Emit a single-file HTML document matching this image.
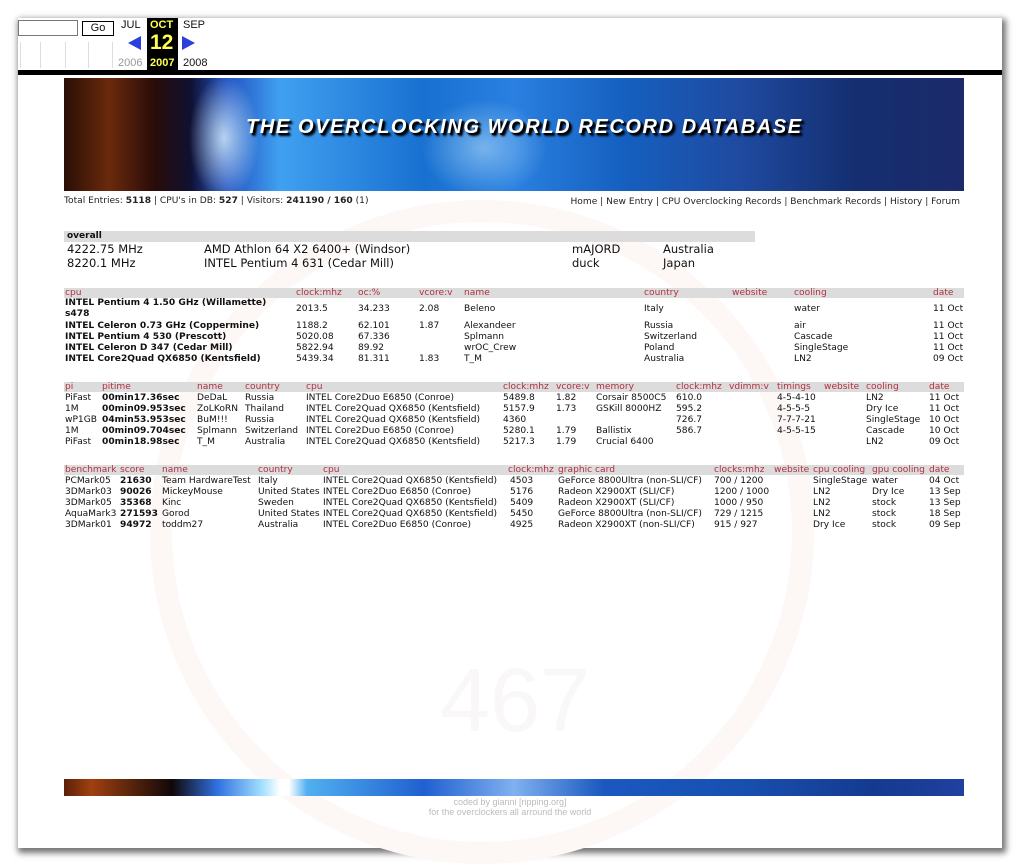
<!DOCTYPE html>
<html><head><meta charset="utf-8"><style>
body{margin:0;background:#fff;width:1020px;height:866px;overflow:hidden;position:relative;font-family:"DejaVu Sans",Verdana,sans-serif;font-size:9.1px;color:#111}
#page{position:absolute;left:18px;top:18px;width:984px;height:830px;background:#fff;box-shadow:2px 3px 6px 2px rgba(0,0,0,.55)}
.a{position:absolute;white-space:nowrap}
.bar{position:absolute;background:#dcdcdc;height:10px}
.h{color:#b03040}
b{font-weight:bold}
.row span,.hr span{position:absolute;white-space:nowrap}
.row,.hr{position:absolute;left:0;width:1020px;height:11px;line-height:11px}
</style></head><body>
<div id="page"></div>
<!-- toolbar -->
<div class="a" style="left:18px;top:20px;width:58px;height:14px;border:1px solid #777;background:#fff"></div>
<div class="a" style="left:82px;top:21px;width:30px;height:13px;border:1px solid #000;font-family:'Liberation Sans',sans-serif;font-size:11px;text-align:center;line-height:13px">Go</div>
<div class="a" style="left:121px;top:19px;font-family:'Liberation Sans',sans-serif;font-size:11px">JUL</div>
<div class="a" style="left:183px;top:19px;font-family:'Liberation Sans',sans-serif;font-size:11px">SEP</div>
<div class="a" style="left:147px;top:18px;width:31px;height:52px;background:#000"></div>
<div class="a" style="left:150px;top:19px;font-family:'Liberation Sans',sans-serif;font-size:11px;font-weight:bold;color:#ff5">OCT</div>
<div class="a" style="left:150px;top:31px;font-family:'Liberation Sans',sans-serif;font-size:21px;font-weight:bold;color:#ff5;line-height:24px">12</div>
<div class="a" style="left:150px;top:57px;font-family:'Liberation Sans',sans-serif;font-size:11px;font-weight:bold;color:#ff5">2007</div>
<div class="a" style="left:118px;top:57px;font-family:'Liberation Sans',sans-serif;font-size:11px;color:#999">2006</div>
<div class="a" style="left:183px;top:57px;font-family:'Liberation Sans',sans-serif;font-size:11px">2008</div>
<svg class="a" style="left:128px;top:36px" width="14" height="14"><polygon points="13,0 13,14 0,7" fill="#2a3fdc"/></svg>
<svg class="a" style="left:182px;top:36px" width="14" height="14"><polygon points="0,0 0,14 13,7" fill="#2a3fdc"/></svg>
<div class="a" style="left:20px;top:42px;width:92px;height:26px;border-left:1px solid #ddd;"></div>
<div class="a" style="left:40px;top:42px;height:26px;border-left:1px solid #ddd;"></div>
<div class="a" style="left:65px;top:42px;height:26px;border-left:1px solid #ddd;"></div>
<div class="a" style="left:88px;top:42px;height:26px;border-left:1px solid #ddd;"></div>
<div class="a" style="left:112px;top:42px;height:26px;border-left:1px solid #ddd;"></div>
<div class="a" style="left:18px;top:70px;width:984px;height:5px;background:#000"></div>

<!-- watermark -->
<div class="a" style="left:150px;top:200px;width:620px;height:620px;border-radius:50%;border:22px solid #fdf7f6"></div>
<div class="a" style="left:440px;top:650px;font-family:'Liberation Sans',sans-serif;font-size:90px;color:#f9f7f7">467</div>

<!-- banner -->
<div class="a" style="left:64px;top:78px;width:900px;height:113px;background:
radial-gradient(ellipse 50px 90px at 160px 60px,rgba(220,245,255,.8),rgba(120,200,255,0) 70%),
radial-gradient(ellipse 90px 70px at 420px 70px,rgba(200,235,255,.5),rgba(0,0,0,0) 70%),
linear-gradient(90deg,#2a0e06 0%,#6a2a0c 5%,#2a0c08 10%,#101030 14%,#2050c0 18%,#40a0f0 24%,#1870d0 40%,#2a80e0 50%,#1560c0 62%,#1f4aa0 75%,#142e70 88%,#1c2a6a 100%)"></div>
<div class="a" style="left:246px;top:116px;font-family:'Liberation Sans',sans-serif;font-style:italic;font-weight:bold;font-size:20px;color:#fff;letter-spacing:1.6px;text-shadow:2px 2px 1px #000,3px 3px 2px #000">THE OVERCLOCKING WORLD RECORD DATABASE</div>

<div class="a" style="left:64px;top:196px;color:#222">Total Entries: <b>5118</b> | CPU's in DB: <b>527</b> | Visitors: <b>241190 / 160</b> (1)</div>
<div class="a" style="right:60px;top:197px;color:#222">Home | New Entry | CPU Overclocking Records | Benchmark Records | History | Forum</div>

<!-- overall -->
<div class="bar" style="left:64px;top:231px;width:691px;height:11px"></div>
<div class="a" style="left:67px;top:231px;font-weight:bold;font-size:9px">overall</div>
<div class="a" style="left:67px;top:242px;font-size:11.5px;line-height:14px">4222.75 MHz<br>8220.1 MHz</div>
<div class="a" style="left:204px;top:242px;font-size:11.5px;line-height:14px">AMD Athlon 64 X2 6400+ (Windsor)<br>INTEL Pentium 4 631 (Cedar Mill)</div>
<div class="a" style="left:572px;top:242px;font-size:11.5px;line-height:14px">mAJORD<br>duck</div>
<div class="a" style="left:663px;top:242px;font-size:11.5px;line-height:14px">Australia<br>Japan</div>

<!-- cpu table -->
<div class="bar" style="left:64px;top:288px;width:900px"></div>
<div class="hr h" style="top:288px"><span style="left:65px">cpu</span><span style="left:296px">clock:mhz</span><span style="left:358px">oc:%</span><span style="left:419px">vcore:v</span><span style="left:464px">name</span><span style="left:644px">country</span><span style="left:732px">website</span><span style="left:794px">cooling</span><span style="left:933px">date</span></div>
<div class="row" style="top:298px"><span style="left:65px;font-weight:bold">INTEL Pentium 4 1.50 GHz (Willamette)</span></div>
<div class="row" style="top:304px"><span style="left:296px">2013.5</span><span style="left:358px">34.233</span><span style="left:419px">2.08</span><span style="left:464px">Beleno</span><span style="left:644px">Italy</span><span style="left:794px">water</span><span style="left:933px">11 Oct</span></div>
<div class="row" style="top:309px"><span style="left:65px;font-weight:bold">s478</span></div>
<div class="row" style="top:321px"><span style="left:65px;font-weight:bold">INTEL Celeron 0.73 GHz (Coppermine)</span><span style="left:296px">1188.2</span><span style="left:358px">62.101</span><span style="left:419px">1.87</span><span style="left:464px">Alexandeer</span><span style="left:644px">Russia</span><span style="left:794px">air</span><span style="left:933px">11 Oct</span></div>
<div class="row" style="top:332px"><span style="left:65px;font-weight:bold">INTEL Pentium 4 530 (Prescott)</span><span style="left:296px">5020.08</span><span style="left:358px">67.336</span><span style="left:464px">Splmann</span><span style="left:644px">Switzerland</span><span style="left:794px">Cascade</span><span style="left:933px">11 Oct</span></div>
<div class="row" style="top:343px"><span style="left:65px;font-weight:bold">INTEL Celeron D 347 (Cedar Mill)</span><span style="left:296px">5822.94</span><span style="left:358px">89.92</span><span style="left:464px">wrOC_Crew</span><span style="left:644px">Poland</span><span style="left:794px">SingleStage</span><span style="left:933px">11 Oct</span></div>
<div class="row" style="top:354px"><span style="left:65px;font-weight:bold">INTEL Core2Quad QX6850 (Kentsfield)</span><span style="left:296px">5439.34</span><span style="left:358px">81.311</span><span style="left:419px">1.83</span><span style="left:464px">T_M</span><span style="left:644px">Australia</span><span style="left:794px">LN2</span><span style="left:933px">09 Oct</span></div>

<!-- pi table -->
<div class="bar" style="left:64px;top:382px;width:900px"></div>
<div class="hr h" style="top:382px"><span style="left:65px">pi</span><span style="left:102px">pitime</span><span style="left:197px">name</span><span style="left:245px">country</span><span style="left:306px">cpu</span><span style="left:503px">clock:mhz</span><span style="left:556px">vcore:v</span><span style="left:596px">memory</span><span style="left:676px">clock:mhz</span><span style="left:729px">vdimm:v</span><span style="left:777px">timings</span><span style="left:824px">website</span><span style="left:866px">cooling</span><span style="left:929px">date</span></div>
<div class="row" style="top:393px"><span style="left:65px">PiFast</span><span style="left:102px;font-weight:bold">00min17.36sec</span><span style="left:197px">DeDaL</span><span style="left:245px">Russia</span><span style="left:306px">INTEL Core2Duo E6850 (Conroe)</span><span style="left:503px">5489.8</span><span style="left:556px">1.82</span><span style="left:596px">Corsair 8500C5</span><span style="left:676px">610.0</span><span style="left:777px">4-5-4-10</span><span style="left:866px">LN2</span><span style="left:929px">11 Oct</span></div>
<div class="row" style="top:404px"><span style="left:65px">1M</span><span style="left:102px;font-weight:bold">00min09.953sec</span><span style="left:197px">ZoLKoRN</span><span style="left:245px">Thailand</span><span style="left:306px">INTEL Core2Quad QX6850 (Kentsfield)</span><span style="left:503px">5157.9</span><span style="left:556px">1.73</span><span style="left:596px">GSKill 8000HZ</span><span style="left:676px">595.2</span><span style="left:777px">4-5-5-5</span><span style="left:866px">Dry Ice</span><span style="left:929px">11 Oct</span></div>
<div class="row" style="top:415px"><span style="left:65px">wP1GB</span><span style="left:102px;font-weight:bold">04min53.953sec</span><span style="left:197px">BuM!!!</span><span style="left:245px">Russia</span><span style="left:306px">INTEL Core2Quad QX6850 (Kentsfield)</span><span style="left:503px">4360</span><span style="left:676px">726.7</span><span style="left:777px">7-7-7-21</span><span style="left:866px">SingleStage</span><span style="left:929px">10 Oct</span></div>
<div class="row" style="top:426px"><span style="left:65px">1M</span><span style="left:102px;font-weight:bold">00min09.704sec</span><span style="left:197px">Splmann</span><span style="left:245px">Switzerland</span><span style="left:306px">INTEL Core2Duo E6850 (Conroe)</span><span style="left:503px">5280.1</span><span style="left:556px">1.79</span><span style="left:596px">Ballistix</span><span style="left:676px">586.7</span><span style="left:777px">4-5-5-15</span><span style="left:866px">Cascade</span><span style="left:929px">10 Oct</span></div>
<div class="row" style="top:437px"><span style="left:65px">PiFast</span><span style="left:102px;font-weight:bold">00min18.98sec</span><span style="left:197px">T_M</span><span style="left:245px">Australia</span><span style="left:306px">INTEL Core2Quad QX6850 (Kentsfield)</span><span style="left:503px">5217.3</span><span style="left:556px">1.79</span><span style="left:596px">Crucial 6400</span><span style="left:866px">LN2</span><span style="left:929px">09 Oct</span></div>

<!-- bench table -->
<div class="bar" style="left:64px;top:465px;width:900px"></div>
<div class="hr h" style="top:465px"><span style="left:65px">benchmark</span><span style="left:120px">score</span><span style="left:162px">name</span><span style="left:258px">country</span><span style="left:323px">cpu</span><span style="left:508px">clock:mhz</span><span style="left:558px">graphic card</span><span style="left:714px">clocks:mhz</span><span style="left:774px">website</span><span style="left:813px">cpu cooling</span><span style="left:872px">gpu cooling</span><span style="left:929px">date</span></div>
<div class="row" style="top:476px"><span style="left:65px">PCMark05</span><span style="left:120px;font-weight:bold">21630</span><span style="left:162px">Team HardwareTest</span><span style="left:258px">Italy</span><span style="left:323px">INTEL Core2Quad QX6850 (Kentsfield)</span><span style="left:510px">4503</span><span style="left:558px">GeForce 8800Ultra (non-SLI/CF)</span><span style="left:714px">700 / 1200</span><span style="left:813px">SingleStage</span><span style="left:872px">water</span><span style="left:929px">04 Oct</span></div>
<div class="row" style="top:487px"><span style="left:65px">3DMark03</span><span style="left:120px;font-weight:bold">90026</span><span style="left:162px">MickeyMouse</span><span style="left:258px">United States</span><span style="left:323px">INTEL Core2Duo E6850 (Conroe)</span><span style="left:510px">5176</span><span style="left:558px">Radeon X2900XT (SLI/CF)</span><span style="left:714px">1200 / 1000</span><span style="left:813px">LN2</span><span style="left:872px">Dry Ice</span><span style="left:929px">13 Sep</span></div>
<div class="row" style="top:498px"><span style="left:65px">3DMark05</span><span style="left:120px;font-weight:bold">35368</span><span style="left:162px">Kinc</span><span style="left:258px">Sweden</span><span style="left:323px">INTEL Core2Quad QX6850 (Kentsfield)</span><span style="left:510px">5409</span><span style="left:558px">Radeon X2900XT (SLI/CF)</span><span style="left:714px">1000 / 950</span><span style="left:813px">LN2</span><span style="left:872px">stock</span><span style="left:929px">13 Sep</span></div>
<div class="row" style="top:509px"><span style="left:65px">AquaMark3</span><span style="left:120px;font-weight:bold">271593</span><span style="left:162px">Gorod</span><span style="left:258px">United States</span><span style="left:323px">INTEL Core2Quad QX6850 (Kentsfield)</span><span style="left:510px">5450</span><span style="left:558px">GeForce 8800Ultra (non-SLI/CF)</span><span style="left:714px">729 / 1215</span><span style="left:813px">LN2</span><span style="left:872px">stock</span><span style="left:929px">18 Sep</span></div>
<div class="row" style="top:520px"><span style="left:65px">3DMark01</span><span style="left:120px;font-weight:bold">94972</span><span style="left:162px">toddm27</span><span style="left:258px">Australia</span><span style="left:323px">INTEL Core2Duo E6850 (Conroe)</span><span style="left:510px">4925</span><span style="left:558px">Radeon X2900XT (non-SLI/CF)</span><span style="left:714px">915 / 927</span><span style="left:813px">Dry Ice</span><span style="left:872px">stock</span><span style="left:929px">09 Sep</span></div>

<!-- footer -->
<div class="a" style="left:64px;top:779px;width:900px;height:17px;background:linear-gradient(90deg,#5a2008 0%,#a04010 3%,#100808 12%,#3070e0 17%,#a0e0ff 22%,#fff 24%,#fff 25%,#50b0f0 27%,#2060d0 40%,#80b0f0 50%,#1a58c0 60%,#1850b0 75%,#143a90 90%,#2040a0 100%)"></div>
<div class="a" style="left:0;width:1020px;top:797px;text-align:center;font-family:'Liberation Sans',sans-serif;font-size:9px;line-height:10px;color:#bbb">coded by gianni [ripping.org]<br>for the overclockers all arround the world</div>
</body></html>
